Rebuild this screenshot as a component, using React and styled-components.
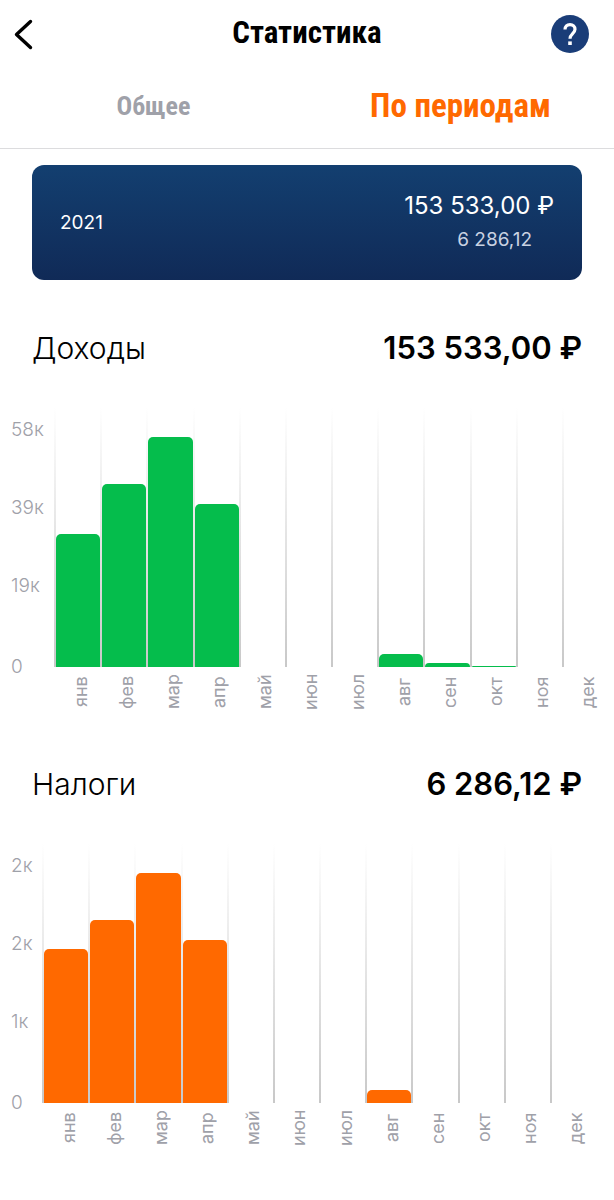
import React from 'react';
import styled, { createGlobalStyle } from 'styled-components'

const GlobalStyle = createGlobalStyle`
    * {
        box-sizing: border-box;
    }

    body {
        margin: 0;
        background-color: white;
        color: black;
        font-family: Inter, "Noto Sans", sans-serif;
    }

    button {
        border: none;
        padding: 0;
        background: none;
        color: inherit;
        cursor: pointer;
    }
`

const Header = styled.header`
    display: grid;
    grid-template-columns: 40px 1fr 40px;
    align-items: center;
    height: 68px;
    padding: 0 24px 0 10px;
`

const Title = styled.h1`
    margin: 0;
    padding: 0 0 2px 14px;
    text-align: center;
    font: bold 31px/40px "Liberation Sans Narrow", "Roboto Condensed", "DejaVu Sans Condensed", sans-serif;
`

const IconButton = styled.button`
    display: flex;
    align-items: center;
    height: 40px;
`

const Tabs = styled.div`
    display: grid;
    grid-template-columns: 1fr 1fr;
    height: 81px;
    border-bottom: 1px solid #dcdcde;
`

const Tab = styled.button`
    padding-bottom: 4px;
    color: ${props => props.$active ? '#ff6900' : '#9fa1a9'};
    font: bold ${props => props.$active ? '33px' : '26px'}/40px "Liberation Sans Narrow", "Roboto Condensed", "DejaVu Sans Condensed", sans-serif;
`

const YearCard = styled.section`
    display: flex;
    align-items: center;
    justify-content: space-between;
    height: 115px;
    margin: 16px 32px 48px;
    padding: 0 28px;
    border-radius: 12px;
    background: linear-gradient(#133f70, #102a57);
    color: white;
    font-size: 19px;
    line-height: 24px;
`

const YearTotals = styled.div`
    display: flex;
    flex-direction: column;
    gap: 6px;
    padding-bottom: 3px;
    text-align: right;
`

const YearIncome = styled.span`
    font-size: 24px;
    line-height: 32px;
`

const YearTax = styled.span`
    padding-right: 22px;
    color: #c9d2e2;
`

const Section = styled.section`
    margin-bottom: 47px;
`

const SectionHeader = styled.div`
    display: flex;
    align-items: center;
    justify-content: space-between;
    margin: 0 32px 40px;
    line-height: 40px;
`

const SectionTitle = styled.h2`
    margin: 0;
    font-size: 30px;
    font-weight: 300;
`

const SectionTotal = styled.span`
    font-size: 31px;
    font-weight: 600;
`

const Chart = styled.div`
    display: grid;
    grid-template-columns: ${props => props.$axis}px 1fr;
    padding-right: ${props => props.$end}px;
    color: #9fa1a9;
    font-size: 19px;
    font-weight: 300;
    line-height: 24px;
`

const Axis = styled.div`
    display: flex;
    flex-direction: column;
    gap: 54px;
    height: 271px;
    padding: 10px 0 0 11px;

    span:last-child {
        margin-top: auto;
    }
`

const Months = styled.div`
    display: grid;
    grid-template-columns: repeat(12, 1fr);
`

const Month = styled.div`
    display: flex;
    flex-direction: column;
    align-items: center;
`

const Track = styled.div`
    display: flex;
    align-items: flex-end;
    width: 100%;
    height: 259px;
    border-left: 2px solid;
    border-image: linear-gradient(transparent, #c8c8c8) 1;
`

const Bar = styled.div`
    width: 100%;
    border-radius: 5px 5px 0 0;
    background-color: ${props => props.$color};
`

/* повёрнутый на 180°, поэтому отступы зеркальные */
const MonthName = styled.span`
    display: flex;
    align-items: center;
    justify-content: center;
    height: 50px;
    padding-right: 7px;
    writing-mode: vertical-rl;
    transform: rotate(180deg);
    font-size: 18px;
    font-weight: 400;
`

const meses = ['янв', 'фев', 'мар', 'апр', 'май', 'июн', 'июл', 'авг', 'сен', 'окт', 'ноя', 'дек']

const income = [133, 183, 230, 163, 0, 0, 0, 13, 4, 1, 0, 0]
const taxes = [154, 183, 230, 163, 0, 0, 0, 13, 0, 0, 0, 0]

const ChartSection = ({ title, total, marks, values, color, axis, end }) => (
    <Section>
        <SectionHeader>
            <SectionTitle>{title}</SectionTitle>
            <SectionTotal>{total}</SectionTotal>
        </SectionHeader>
        <Chart $axis={axis} $end={end}>
            <Axis>
                {marks.map((mark, i) => <span key={i}>{mark}</span>)}
            </Axis>
            <Months>
                {meses.map((mes, i) => (
                    <Month key={mes}>
                        <Track>
                            {values[i] > 0 && <Bar $color={color} style={{ height: values[i] }}/>}
                        </Track>
                        <MonthName>{mes}</MonthName>
                    </Month>
                ))}
            </Months>
        </Chart>
    </Section>
)

export default class App extends React.Component {

    state = {
        tab: "periods",
    }

    render() {
        const { tab } = this.state

        return (
            <main>
                <GlobalStyle/>
                <Header>
                    <IconButton aria-label="Назад">
                        <svg width="28" height="34" viewBox="0 0 28 34" fill="none" stroke="black" strokeWidth="3.4" strokeLinecap="round" strokeLinejoin="round">
                            <path d="M20.5 4.5 6.5 17.5 20.5 30.5"/>
                        </svg>
                    </IconButton>
                    <Title>Статистика</Title>
                    <IconButton aria-label="Помощь">
                        <svg width="40" height="40" viewBox="0 0 40 40" fill="none">
                            <circle cx="20" cy="20" r="19" fill="#1a3d78"/>
                            <path d="M15 15.6c0-3 2-5 5-5s5 1.9 5 4.7c0 4.1-5 4.6-5 9.4" stroke="white" strokeWidth="3.2"/>
                            <path d="M18.2 27.4h3.6v3.6h-3.6z" fill="white"/>
                        </svg>
                    </IconButton>
                </Header>
                <Tabs role="tablist">
                    <Tab role="tab" aria-selected={tab === "common"} $active={tab === "common"} onClick={() => this.setState({ tab: "common" })}>Общее</Tab>
                    <Tab role="tab" aria-selected={tab === "periods"} $active={tab === "periods"} onClick={() => this.setState({ tab: "periods" })}>По периодам</Tab>
                </Tabs>
                <YearCard>
                    <span>2021</span>
                    <YearTotals>
                        <YearIncome>153 533,00 ₽</YearIncome>
                        <YearTax>6 286,12</YearTax>
                    </YearTotals>
                </YearCard>
                <ChartSection
                    title="Доходы"
                    total="153 533,00 ₽"
                    marks={['58к', '39к', '19к', '0']}
                    values={income}
                    color="#05bd4c"
                    axis={54}
                    end={6}
                />
                <ChartSection
                    title="Налоги"
                    total="6 286,12 ₽"
                    marks={['2к', '2к', '1к', '0']}
                    values={taxes}
                    color="#ff6900"
                    axis={42}
                    end={18}
                />
            </main>
        )
    }
}
